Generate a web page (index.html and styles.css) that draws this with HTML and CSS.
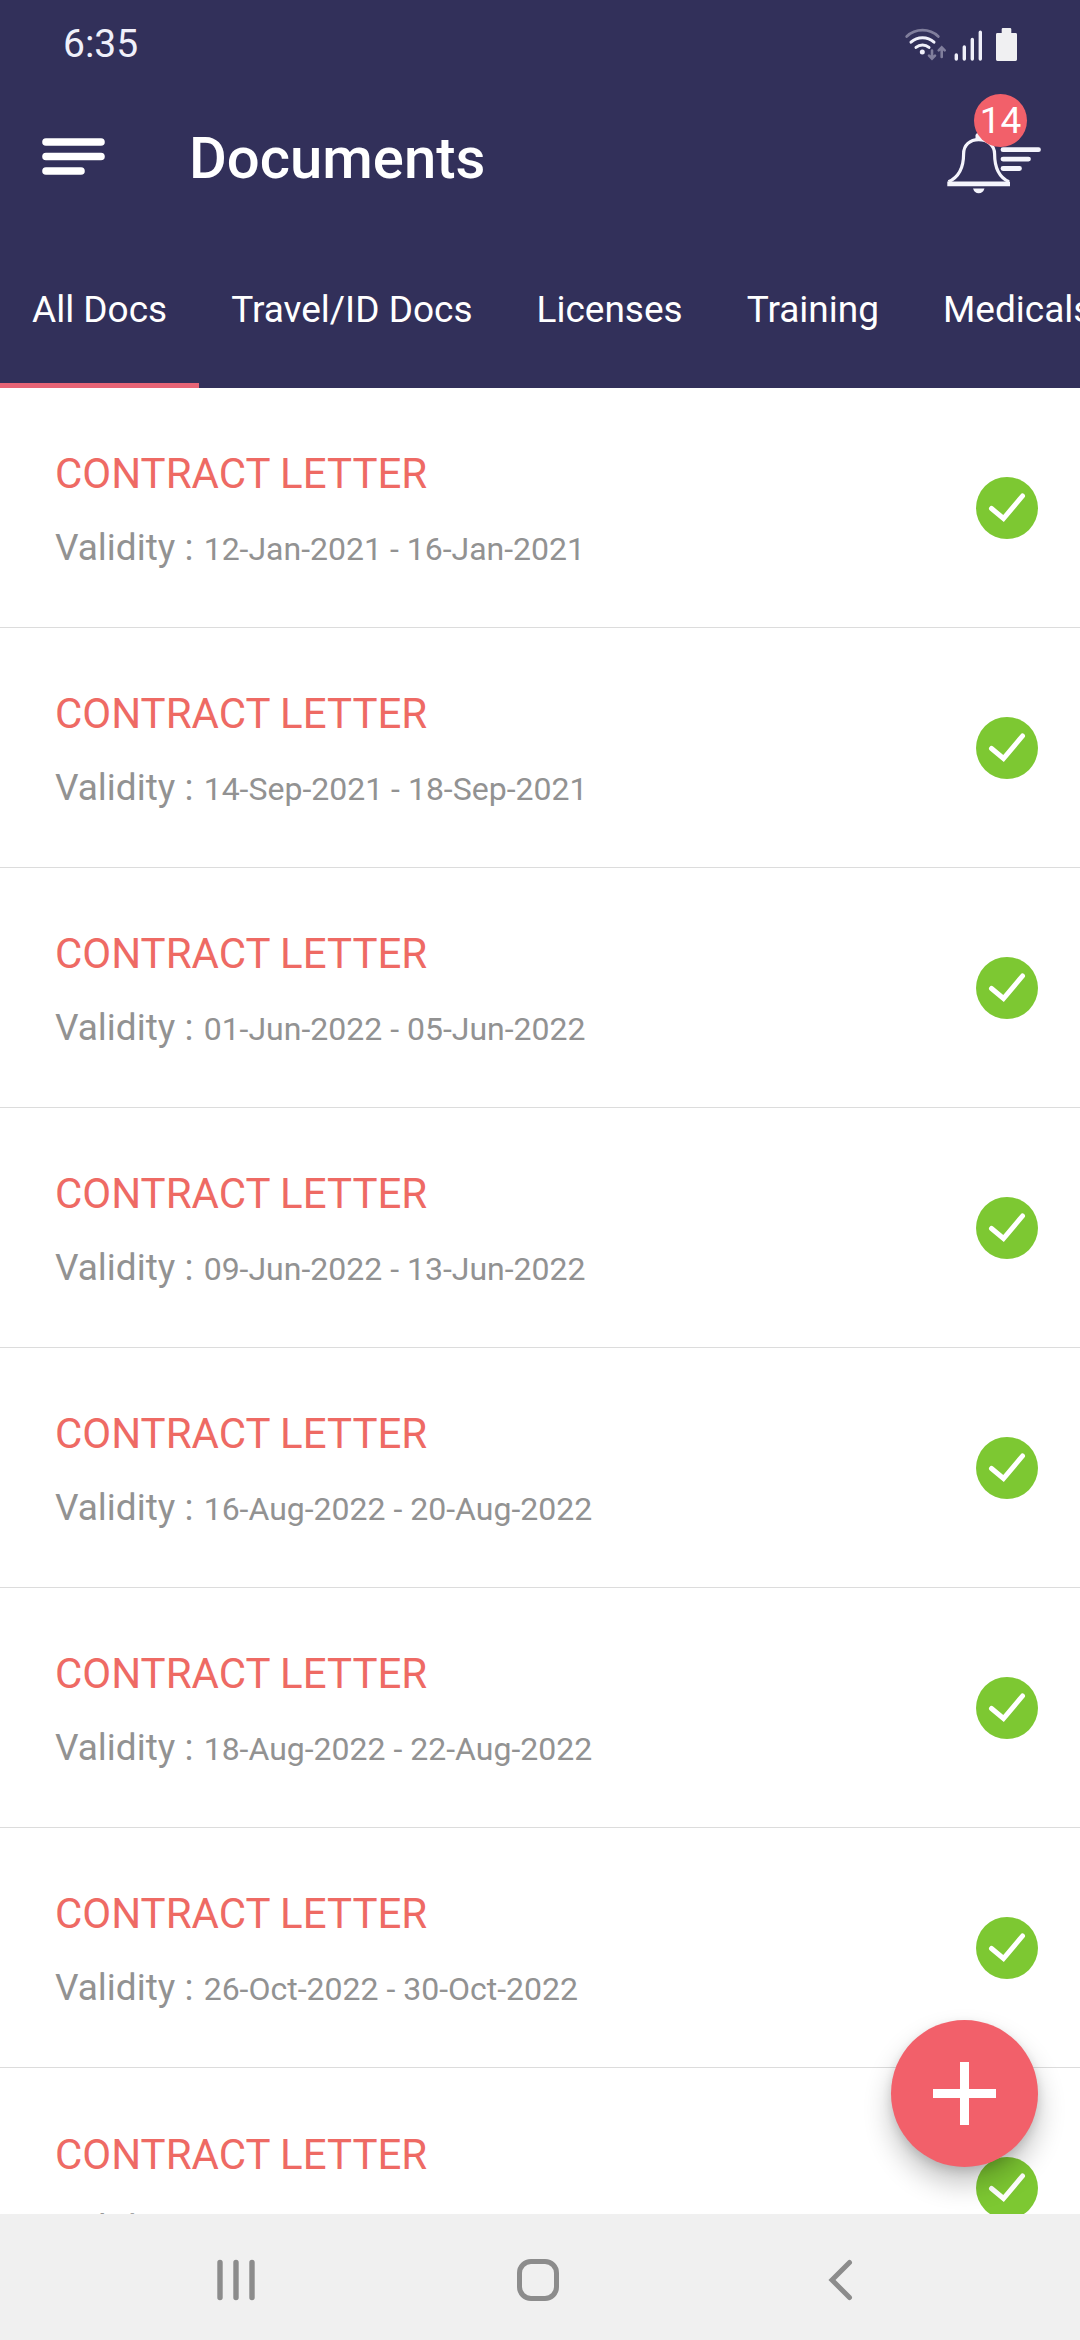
FILE: index.html
```html
<!DOCTYPE html>
<html lang="en">

<head>
    <meta charset="utf-8">
    <meta name="viewport" content="width=device-width, initial-scale=1">
    <link rel="stylesheet" href="styles.css">
    <title>Documents</title>
</head>

<body>

    <header class="header">
        <div class="status-bar">
            <span>6:35</span>
            <svg class="status-icons" width="114" height="34" viewBox="0 0 114 34" fill="none" stroke-linecap="round">
                <!-- wifi -->
                <path d="M2.7 9.5A23 23 0 0 1 34.3 9.5" stroke="#807e9c" stroke-width="2.8"/>
                <path d="M7 15.2A17 17 0 0 1 30 15.2M12 20.4A10 10 0 0 1 25 20.4" stroke="#f0f0fa" stroke-width="3"/>
                <circle cx="18.3" cy="25" r="2.5" fill="#f0f0fa"/>
                <path d="M28 23.5V31M25 28.6L28 31.6L31 28.6M37.7 30V21M34.7 23.4L37.7 20.4L40.7 23.4" stroke="#807e9c" stroke-width="2.6"/>
                <!-- signal -->
                <path d="M52.3 28V32M60.3 20V32M68.3 12.4V32M76.3 5.2V32" stroke="#f0f0fa" stroke-width="3.4"/>
                <!-- battery -->
                <path d="M97.7 6V2.2Q97.7 1 98.9 1H106.1Q107.3 1 107.3 2.2V6H111.6Q113 6 113 7.4V32.6Q113 34 111.6 34H93.4Q92 34 92 32.6V7.4Q92 6 93.4 6Z" fill="#f0f0f2"/>
            </svg>
        </div>

        <div class="app-bar">
            <button class="icon-button" type="button" aria-label="Menu">
                <svg width="64" height="40" viewBox="0 0 64 40" stroke="#fff" stroke-width="7.6" stroke-linecap="round">
                    <path d="M4 4H59M4 18.5H59M4 33H39"/>
                </svg>
            </button>
            <h1 class="title">Documents</h1>
            <button class="icon-button bell" type="button" aria-label="Notifications">
                <svg width="100" height="72" viewBox="0 -10 100 72" fill="none" stroke="#f4f4fc">
                    <path d="M4.5 49.8C14 45.5 19.6 36 19.6 22C19.6 13 26 7.6 34.7 7.6C43.4 7.6 50.6 13 50.6 22C50.6 36 55.5 45.5 65 49.8" stroke-width="3.2"/>
                    <path d="M3.3 49.5H66V54.2H3.3Z" fill="#f4f4fc" stroke="none"/>
                    <path d="M31.5 7V3Q32 1 34.5 1Q37.5 1 38 3V7Z" fill="#f4f4fc" stroke="none"/>
                    <path d="M29 56.5H40.5Q39 61.2 34.7 61.2Q30.5 61.2 29 56.5Z" fill="#f4f4fc" stroke="none"/>
                    <path d="M59 17.7H94.5M59 27.1H84.5M59 36.5H75.5" stroke-width="4.8" stroke-linecap="round"/>
                </svg>
                <span class="badge">14</span>
            </button>
        </div>

        <nav class="tabs">
            <a class="tab active" href="#">All Docs</a>
            <a class="tab" href="#">Travel/ID Docs</a>
            <a class="tab" href="#">Licenses</a>
            <a class="tab" href="#">Training</a>
            <a class="tab" href="#">Medicals</a>
        </nav>
    </header>

    <!-- one check mark shared by all rows -->
    <svg class="sprite" width="0" height="0">
        <symbol id="check" viewBox="0 0 62 62">
            <circle cx="31" cy="31" r="31" fill="#7dc832"/>
            <path d="M15.5 31.5L27.5 41.5L46.5 19" fill="none" stroke="#fff" stroke-width="5" stroke-linecap="round"/>
        </symbol>
    </svg>

    <main class="content">
        <ul class="docs">
            <li class="doc">
                <div class="doc-text">
                    <h2 class="doc-name">CONTRACT LETTER</h2>
                    <p class="validity">Validity : <span class="dates">12-Jan-2021 - 16-Jan-2021</span></p>
                </div>
                <svg class="check"><use href="#check"/></svg>
            </li>
            <li class="doc">
                <div class="doc-text">
                    <h2 class="doc-name">CONTRACT LETTER</h2>
                    <p class="validity">Validity : <span class="dates">14-Sep-2021 - 18-Sep-2021</span></p>
                </div>
                <svg class="check"><use href="#check"/></svg>
            </li>
            <li class="doc">
                <div class="doc-text">
                    <h2 class="doc-name">CONTRACT LETTER</h2>
                    <p class="validity">Validity : <span class="dates">01-Jun-2022 - 05-Jun-2022</span></p>
                </div>
                <svg class="check"><use href="#check"/></svg>
            </li>
            <li class="doc">
                <div class="doc-text">
                    <h2 class="doc-name">CONTRACT LETTER</h2>
                    <p class="validity">Validity : <span class="dates">09-Jun-2022 - 13-Jun-2022</span></p>
                </div>
                <svg class="check"><use href="#check"/></svg>
            </li>
            <li class="doc">
                <div class="doc-text">
                    <h2 class="doc-name">CONTRACT LETTER</h2>
                    <p class="validity">Validity : <span class="dates">16-Aug-2022 - 20-Aug-2022</span></p>
                </div>
                <svg class="check"><use href="#check"/></svg>
            </li>
            <li class="doc">
                <div class="doc-text">
                    <h2 class="doc-name">CONTRACT LETTER</h2>
                    <p class="validity">Validity : <span class="dates">18-Aug-2022 - 22-Aug-2022</span></p>
                </div>
                <svg class="check"><use href="#check"/></svg>
            </li>
            <li class="doc">
                <div class="doc-text">
                    <h2 class="doc-name">CONTRACT LETTER</h2>
                    <p class="validity">Validity : <span class="dates">26-Oct-2022 - 30-Oct-2022</span></p>
                </div>
                <svg class="check"><use href="#check"/></svg>
            </li>
            <li class="doc">
                <div class="doc-text">
                    <h2 class="doc-name">CONTRACT LETTER</h2>
                    <p class="validity">Validity :</p>
                </div>
                <svg class="check"><use href="#check"/></svg>
            </li>
        </ul>

        <button class="fab" type="button" aria-label="Add document">
            <svg width="63" height="63" viewBox="0 0 63 63" stroke="#fff" stroke-width="9">
                <path d="M0 31.5H63M31.5 0V63"/>
            </svg>
        </button>
    </main>

    <footer class="nav-bar">
        <button class="icon-button" type="button" aria-label="Recent apps">
            <svg width="42" height="42" viewBox="0 0 42 42" stroke="#8c8c8c" stroke-width="5.4" stroke-linecap="round">
                <path d="M5 3.5V38.5M21 3.5V38.5M37 3.5V38.5"/>
            </svg>
        </button>
        <button class="icon-button" type="button" aria-label="Home">
            <svg width="42" height="42" viewBox="0 0 42 42" fill="none" stroke="#8c8c8c" stroke-width="5">
                <rect x="2.5" y="2.5" width="37" height="37" rx="11.5"/>
            </svg>
        </button>
        <button class="icon-button" type="button" aria-label="Back">
            <svg width="42" height="42" viewBox="0 0 42 42" fill="none" stroke="#8c8c8c" stroke-width="5" stroke-linecap="round">
                <path d="M30.5 3.5L13 21L30.5 38.5"/>
            </svg>
        </button>
    </footer>

</body>
</html>
```

FILE: styles.css
```css
* {
    box-sizing: border-box;
}

body {
    display: flex;
    flex-direction: column;
    height: 100vh;
    margin: 0;
    background: #fff;
    font-family: Roboto, "Liberation Sans", sans-serif;
    overflow: hidden;
}

svg {
    display: block;
}

.header {
    flex: none;
    background: #32305a;
    color: #fff;
}

.status-bar {
    display: flex;
    align-items: center;
    justify-content: space-between;
    height: 84px;
    padding: 4px 62px 0 63px;
    font-size: 39px;
    line-height: 46px;
    color: #f0f0fa;
}

.app-bar {
    display: flex;
    align-items: center;
    height: 148px;
    padding: 0 36px 0 42px;
}

.icon-button {
    display: block;
    padding: 0;
    border: none;
    background: none;
    color: inherit;
    font-family: inherit;
}

.title {
    flex: 1;
    margin: 0 0 0 83px;
    font-size: 58px;
    font-weight: 500;
    line-height: 64px;
}

.bell {
    position: relative;
}

.badge {
    position: absolute;
    top: -28px;
    left: 30px;
    width: 53px;
    height: 53px;
    border-radius: 50%;
    background: #f2606a;
    font-size: 37px;
    line-height: 54px;
    text-align: center;
}

.tabs {
    display: flex;
    overflow: hidden;
}

.tab {
    flex: none;
    height: 156px;
    padding: 0 32px;
    border-bottom: 5px solid transparent;
    color: #fff;
    font-size: 37px;
    line-height: 156px;
    text-decoration: none;
    white-space: nowrap;
}

.tab.active {
    border-bottom-color: #e76476;
}

.sprite {
    position: absolute;
}

.content {
    flex: 1;
    min-height: 0;
    position: relative;
    overflow: hidden;
}

.docs {
    margin: 0;
    padding: 0;
    list-style: none;
}

.doc {
    display: flex;
    align-items: center;
    justify-content: space-between;
    height: 240px;
    padding: 0 42px 0 55px;
    border-bottom: 1px solid #dcdcdc;
}

.doc-text {
    padding-top: 3px;
}

.doc-name {
    margin: 0 0 29px;
    color: #ee6a64;
    font-size: 42px;
    font-weight: 400;
    line-height: 50px;
}

.validity {
    margin: 0;
    color: #929292;
    font-size: 37px;
    line-height: 40px;
}

.dates {
    margin-left: 1px;
    font-size: 32px;
}

.check {
    flex: none;
    width: 62px;
    height: 62px;
}

.fab {
    display: flex;
    align-items: center;
    justify-content: center;
    position: absolute;
    right: 42px;
    bottom: 47px;
    width: 147px;
    height: 147px;
    padding: 0;
    border: none;
    border-radius: 50%;
    background: #f2606a;
    box-shadow: 0 16px 28px rgba(0, 0, 0, .24), 0 4px 10px rgba(0, 0, 0, .12);
}

.nav-bar {
    flex: none;
    display: flex;
    align-items: center;
    justify-content: center;
    gap: 260px;
    height: 126px;
    padding: 6px 4px 0 0;
    background: #f0f0f0;
}
```
